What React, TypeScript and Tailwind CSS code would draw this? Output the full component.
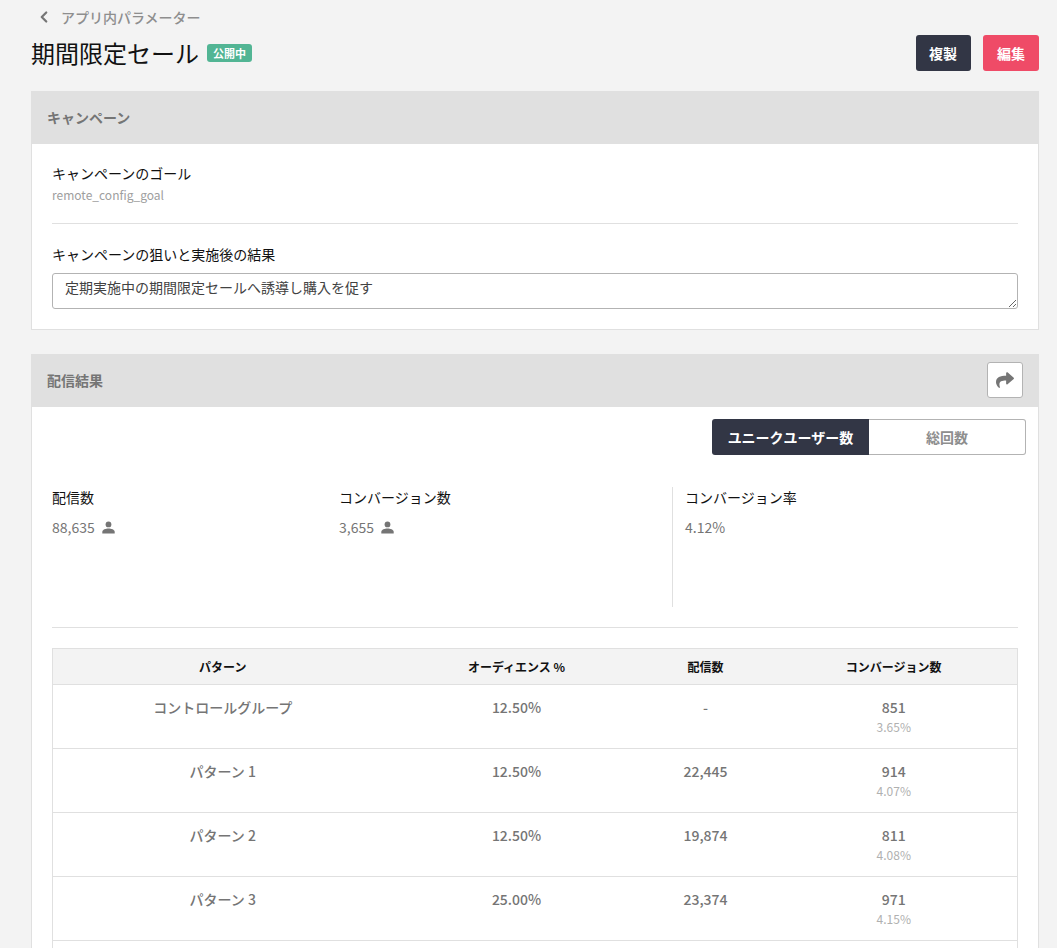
import { ChevronLeft } from "lucide-react";
import { FaShare } from "react-icons/fa";

const rows = [
    { name: "コントロールグループ", audience: "12.50%", sent: "-", conv: "851", rate: "3.65%" },
    { name: "パターン 1", audience: "12.50%", sent: "22,445", conv: "914", rate: "4.07%" },
    { name: "パターン 2", audience: "12.50%", sent: "19,874", conv: "811", rate: "4.08%" },
    { name: "パターン 3", audience: "25.00%", sent: "23,374", conv: "971", rate: "4.15%" },
];

function UserIcon() {
    return (
        <svg width="13" height="13" viewBox="0 0 13 13" fill="#757575">
            <circle cx="6.5" cy="3.4" r="2.9" />
            <path d="M0.3 12.5v-1.6c0-2.3 3.6-3.4 6.2-3.4s6.2 1.1 6.2 3.4v1.6z" />
        </svg>
    );
}

function Stat({ label, value, user }: { label: string; value: string; user?: boolean }) {
    return (
        <div>
            <p className="text-sm leading-5 text-[#111]">{label}</p>
            <div className="mt-[9px] flex items-center gap-[7px] text-sm leading-[22px] text-[#757575]">
                {value}
                {user ? <UserIcon /> : null}
            </div>
        </div>
    );
}

function App() {
    return (
        <div className="h-[948px] overflow-hidden bg-[#f3f3f3] pl-[31px] pr-[18px] font-['Noto_Sans_CJK_JP',sans-serif]">
            <div className="flex h-[35px] items-center pb-[2px] pl-[4px]">
                <ChevronLeft size={18} strokeWidth={3} className="text-[#757575]" />
                <span className="ml-[8px] text-sm font-medium text-[#8e8e8e]">アプリ内パラメーター</span>
            </div>
            <div className="flex h-[36px] items-center justify-between">
                <div className="flex items-center gap-2">
                    <h1 className="text-2xl font-normal text-[#111]">期間限定セール</h1>
                    <span className="flex h-[18px] w-[45px] items-center justify-center rounded-[3px] bg-[#52b594] pt-px text-[11px] font-bold text-white">公開中</span>
                </div>
                <div className="flex gap-3">
                    <button className="h-9 w-[55px] rounded-[3px] bg-[#323645] pr-px text-sm font-bold text-white">複製</button>
                    <button className="h-9 w-14 rounded-[3px] bg-[#ef4b67] text-sm font-bold text-white">編集</button>
                </div>
            </div>

            <section className="mt-5 border-x border-b border-[#e0e0e0] bg-white">
                <div className="-mx-px flex h-[53px] items-center bg-[#e0e0e0] px-4 pb-[2px]">
                    <h2 className="text-sm font-bold text-[#757575]">キャンペーン</h2>
                </div>
                <div className="px-5 pb-5">
                    <div className="border-b border-[#e0e0e0] pt-[19px] pb-[19px]">
                        <p className="text-sm leading-5 text-[#111]">キャンペーンのゴール</p>
                        <p className="mt-[3px] text-xs leading-[18px] text-[#9e9e9e]">remote_config_goal</p>
                    </div>
                    <p className="mt-5 text-sm leading-5 text-[#111]">キャンペーンの狙いと実施後の結果</p>
                    <textarea
                        readOnly
                        value="定期実施中の期間限定セールへ誘導し購入を促す"
                        className="mt-[9px] block h-9 w-full rounded-[3px] border border-[#b3b3b3] px-3 py-[2px] text-sm leading-[22px] text-[#424242]"
                    />
                </div>
            </section>

            <section className="mt-6 border-x border-[#e0e0e0] bg-white">
                <div className="-mx-px flex h-[53px] items-center justify-between bg-[#e0e0e0] pb-[2px] pl-4 pr-4">
                    <h2 className="text-sm font-bold text-[#757575]">配信結果</h2>
                    <button className="flex h-9 w-9 items-center justify-center rounded-[3px] border border-[#b3b3b3] bg-white">
                        <FaShare size={18} color="#757575" />
                    </button>
                </div>
                <div className="flex justify-end pt-3 pr-3">
                    <div className="flex h-9 w-[314px]">
                        <div className="flex w-[157px] items-center justify-center rounded-l-[3px] bg-[#323645] text-sm font-bold text-white">ユニークユーザー数</div>
                        <div className="flex flex-1 items-center justify-center rounded-r-[3px] border-y border-r border-[#b3b3b3] text-sm font-bold text-[#8e8e8e]">総回数</div>
                    </div>
                </div>
                <div className="px-5">
                    <div className="mt-8 flex h-[120px]">
                        <div className="w-[287px]"><Stat label="配信数" value="88,635" user /></div>
                        <div className="w-[333px]"><Stat label="コンバージョン数" value="3,655" user /></div>
                        <div className="border-l border-[#e0e0e0] pl-3"><Stat label="コンバージョン率" value="4.12%" /></div>
                    </div>
                    <div className="mt-5 border-b border-[#e0e0e0]" />
                    <table className="mt-5 w-full table-fixed border-collapse border border-[#e0e0e0] text-center">
                        <thead>
                            <tr className="h-9 border-b border-[#e0e0e0] bg-[#f3f3f3] text-xs font-bold text-[#111]">
                                <th className="w-[340px] font-bold">パターン</th>
                                <th className="w-[248px] font-bold">オーディエンス %</th>
                                <th className="w-[130px] font-bold">配信数</th>
                                <th className="font-bold">コンバージョン数</th>
                            </tr>
                        </thead>
                        <tbody>
                            {rows.map((r) => (
                                <tr key={r.name} className="h-16 border-b border-[#e0e0e0] align-top text-sm font-medium text-[#757575]">
                                    <td className="pt-[11px] leading-[22px]">{r.name}</td>
                                    <td className="pt-[11px] leading-[22px]">{r.audience}</td>
                                    <td className="pt-[11px] leading-[22px]">{r.sent}</td>
                                    <td className="pt-[11px] leading-[22px]">
                                        {r.conv}
                                        <p className="mt-px text-xs leading-[16px] font-normal text-[#b0b0b0]">{r.rate}</p>
                                    </td>
                                </tr>
                            ))}
                            <tr className="h-16">
                                <td colSpan={4} />
                            </tr>
                        </tbody>
                    </table>
                </div>
            </section>
        </div>
    );
}

export default App;
